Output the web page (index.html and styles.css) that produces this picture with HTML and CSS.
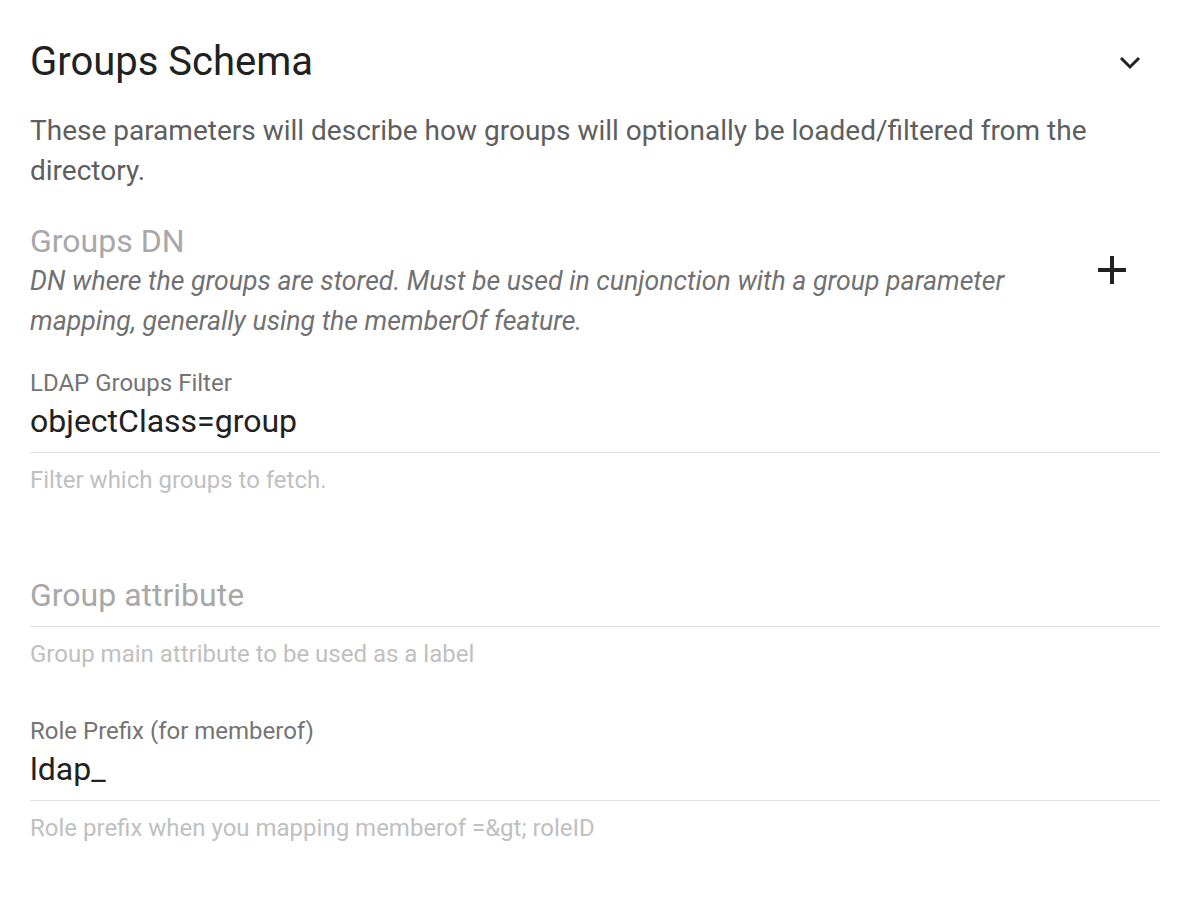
FILE: index.html
```html
<!DOCTYPE html>
<html>
<head>
<meta charset="utf-8">
<link rel="stylesheet" href="styles.css">
</head>
<body>
<section class="panel">
  <header class="header">
    <h2 class="title">Groups Schema</h2>
    <button class="icon-btn chevron" aria-label="collapse">
      <svg width="22" height="14" viewBox="0 0 22 14"><polyline points="2,2 11,11 20,2" fill="none" stroke="#212121" stroke-width="3"/></svg>
    </button>
  </header>
  <p class="desc">These parameters will describe how groups will optionally be loaded/filtered from the directory.</p>

  <div class="dn-row">
    <div class="dn-text">
      <div class="dn-title">Groups DN</div>
      <div class="dn-desc">DN where the groups are stored. Must be used in cunjonction with a group parameter mapping, generally using the memberOf feature.</div>
    </div>
    <button class="icon-btn plus" aria-label="add">
      <svg width="28" height="28" viewBox="0 0 28 28"><path d="M14 0V28M0 14H28" stroke="#212121" stroke-width="4" fill="none"/></svg>
    </button>
  </div>

  <div class="field">
    <div class="label">LDAP Groups Filter</div>
    <div class="value">objectClass=group</div>
    <div class="helper">Filter which groups to fetch.</div>
  </div>

  <div class="field">
    <div class="label"></div>
    <div class="value placeholder">Group attribute</div>
    <div class="helper">Group main attribute to be used as a label</div>
  </div>

  <div class="field">
    <div class="label">Role Prefix (for memberof)</div>
    <div class="value">ldap_</div>
    <div class="helper">Role prefix when you mapping memberof =&amp;gt; roleID</div>
  </div>
</section>
</body>
</html>
```

FILE: styles.css
```css
* { box-sizing: border-box; }
html, body {
  margin: 0;
  padding: 0;
  background: #ffffff;
  font-family: Roboto, "Noto Sans", sans-serif;
}
.panel {
  padding: 38px 28px 0 30px;
}
.header {
  display: flex;
  align-items: center;
  justify-content: space-between;
  height: 48px;
}
.title {
  margin: 0;
  font-size: 40px;
  line-height: 48px;
  font-weight: 400;
  color: #212121;
}
.icon-btn {
  border: 0;
  background: none;
  padding: 0;
  display: flex;
  align-items: center;
  justify-content: center;
}
.chevron {
  width: 22px;
  height: 14px;
  margin-right: 19px;
  margin-top: 1px;
}
.desc {
  margin: 25px 0 0 0;
  font-size: 28px;
  line-height: 40px;
  color: #5e5e5e;
}
.dn-row {
  display: flex;
  align-items: flex-start;
  margin-top: 30px;
}
.dn-text { flex: 1; }
.dn-title {
  font-size: 32px;
  line-height: 40px;
  color: #a8a8a8;
}
.dn-desc {
  font-size: 26.67px;
  line-height: 40px;
  font-style: italic;
  color: #717171;
  padding-right: 60px;
}
.plus {
  width: 28px;
  height: 28px;
  margin-top: 35px;
  margin-right: 34px;
}
.field {
  margin-top: 28px;
}
.field + .field { margin-top: 49px; }
.label {
  font-size: 24px;
  line-height: 28px;
  height: 28px;
  color: #747474;
}
.value {
  margin-top: 4px;
  font-size: 32px;
  line-height: 40px;
  color: #212121;
  padding-bottom: 11px;
  border-bottom: 1.5px solid #e0e0e0;
}
.value.placeholder { color: #a8a8a8; }
.helper {
  margin-top: 13px;
  font-size: 24px;
  line-height: 28px;
  color: #c0c0c0;
}
```
